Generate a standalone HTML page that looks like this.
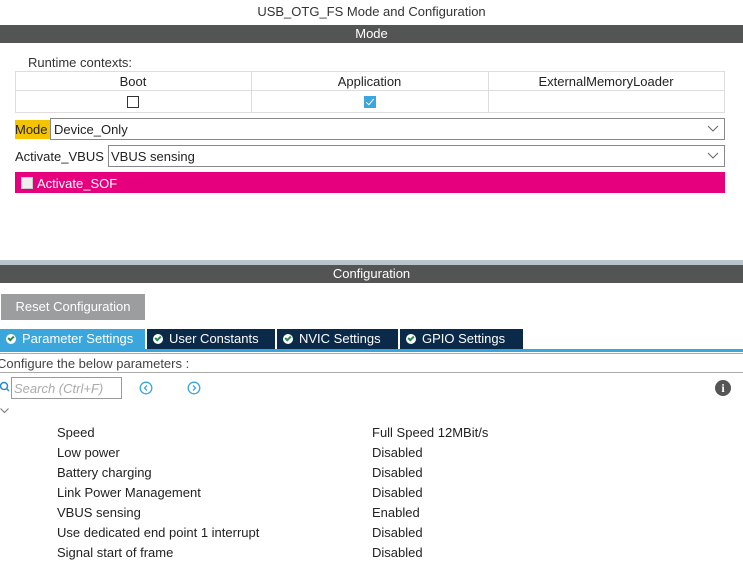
<html><head><style>
body{margin:0;width:743px;height:569px;background:#fff;font-family:"Liberation Sans",sans-serif;font-size:13px;color:#222;position:relative;overflow:hidden}
.a{position:absolute}
.bar{background:#535554;color:#fff;text-align:center;left:0;width:743px}
.row{position:absolute;left:57px;font-size:13px}
.val{position:absolute;left:372px}
.tab{position:absolute;top:329px;height:20px;color:#fff;font-size:13px;line-height:20px;background:#0b2a4a}
.chk{display:inline-block;width:10px;height:10px;border-radius:50%;background:#fff;vertical-align:-1px;margin:0 6px 0 6px;position:relative}
.chk:after{content:"";position:absolute;left:3px;top:1px;width:2px;height:4px;border:solid #2a8a4a;border-width:0 2px 2px 0;transform:rotate(45deg)}
</style></head><body>
<div class="a" style="top:4px;width:743px;text-align:center;font-size:13px;color:#333">USB_OTG_FS Mode and Configuration</div>
<div class="a bar" style="top:25px;height:18px;line-height:18px">Mode</div>
<div class="a" style="left:28px;top:55px;color:#333">Runtime contexts:</div>
<div class="a" style="left:15px;top:71px;width:708px;height:40px;border:1px solid #ddd"></div>
<div class="a" style="left:15px;top:90px;width:709px;height:1px;background:#ddd"></div>
<div class="a" style="left:251px;top:71px;width:1px;height:41px;background:#ddd"></div>
<div class="a" style="left:488px;top:71px;width:1px;height:41px;background:#ddd"></div>
<div class="a" style="left:15px;top:74px;width:236px;text-align:center">Boot</div>
<div class="a" style="left:251px;top:74px;width:237px;text-align:center">Application</div>
<div class="a" style="left:488px;top:74px;width:236px;text-align:center">ExternalMemoryLoader</div>
<div class="a" style="left:127px;top:96px;width:10px;height:10px;border:1px solid #333"></div>
<div class="a" style="left:364px;top:96px;width:12px;height:12px;background:#3aa7e0"><div style="position:absolute;left:4px;top:1px;width:3px;height:7px;border:solid #fff;border-width:0 1px 1px 0;transform:rotate(40deg)"></div></div>
<div class="a" style="left:15px;top:120px;width:35px;height:19px;background:#f5c400"></div>
<div class="a" style="left:15px;top:122px">Mode</div>
<div class="a" style="left:50px;top:118px;width:673px;height:20px;border:1px solid #888"></div>
<div class="a" style="left:54px;top:122px">Device_Only</div>
<svg class="a" style="left:707px;top:125px" width="12" height="8"><path d="M1 1L6 6L11 1" fill="none" stroke="#666"/></svg>
<div class="a" style="left:15px;top:149px">Activate_VBUS</div>
<div class="a" style="left:108px;top:145px;width:615px;height:20px;border:1px solid #888"></div>
<div class="a" style="left:111px;top:149px">VBUS sensing</div>
<svg class="a" style="left:707px;top:152px" width="12" height="8"><path d="M1 1L6 6L11 1" fill="none" stroke="#666"/></svg>
<div class="a" style="left:15px;top:172px;width:710px;height:21px;background:#e6007e"></div>
<div class="a" style="left:21px;top:177px;width:10px;height:10px;background:#eee;border:1px solid #ccc"></div>
<div class="a" style="left:37px;top:176px;color:#fff">Activate_SOF</div>
<div class="a" style="left:0;top:260px;width:743px;height:5px;background:#b9c4cb"></div>
<div class="a bar" style="top:265px;height:18px;line-height:18px">Configuration</div>
<div class="a" style="left:1px;top:294px;width:144px;height:26px;background:#9b9d9e;color:#fff;line-height:26px;text-align:center">Reset Configuration</div>
<div class="tab" style="left:0;width:145px;background:#3ba6dc"><span class="chk"></span>Parameter Settings</div>
<div class="tab" style="left:147px;width:128px"><span class="chk"></span>User Constants</div>
<div class="tab" style="left:277px;width:121px"><span class="chk"></span>NVIC Settings</div>
<div class="tab" style="left:400px;width:123px"><span class="chk"></span>GPIO Settings</div>
<div class="a" style="left:0;top:349px;width:743px;height:3px;background:#3ba6dc"></div>
<div class="a" style="left:0;top:353px;width:743px;height:1px;background:#aaa"></div>
<div class="a" style="left:-3px;top:356px;color:#444">Configure the below parameters :</div>
<div class="a" style="left:0;top:372px;width:743px;height:1px;background:#aaa"></div>
<svg class="a" style="left:0;top:381px" width="10" height="12"><circle cx="4" cy="5" r="3.5" fill="none" stroke="#2a8ad0" stroke-width="1.5"/><path d="M6.5 7.5L9 10" stroke="#2a8ad0" stroke-width="1.5"/></svg>
<div class="a" style="left:11px;top:377px;width:109px;height:20px;border:1px solid #999"></div>
<div class="a" style="left:14px;top:381px;color:#aaa;font-style:italic">Search (Ctrl+F)</div>
<svg class="a" style="left:139px;top:381px" width="14" height="14"><circle cx="7" cy="7" r="5.8" fill="none" stroke="#3ba6dc" stroke-width="1.3"/><path d="M8 4.5L5.5 7L8 9.5" fill="none" stroke="#3ba6dc" stroke-width="1.3"/></svg>
<svg class="a" style="left:187px;top:381px" width="14" height="14"><circle cx="7" cy="7" r="5.8" fill="none" stroke="#3ba6dc" stroke-width="1.3"/><path d="M6 4.5L8.5 7L6 9.5" fill="none" stroke="#3ba6dc" stroke-width="1.3"/></svg>
<div class="a" style="left:715px;top:380px;width:16px;height:16px;border-radius:50%;background:#555;color:#fff;font-weight:bold;font-size:12px;line-height:16px;text-align:center;font-family:'Liberation Serif',serif">i</div>
<svg class="a" style="left:0;top:408px" width="10" height="6"><path d="M0.5 0.5L4.5 4.5L8.5 0.5" fill="none" stroke="#777"/></svg>
<div class="row" style="top:425px">Speed</div><div class="val" style="top:425px">Full Speed 12MBit/s</div>
<div class="row" style="top:445px">Low power</div><div class="val" style="top:445px">Disabled</div>
<div class="row" style="top:465px">Battery charging</div><div class="val" style="top:465px">Disabled</div>
<div class="row" style="top:485px">Link Power Management</div><div class="val" style="top:485px">Disabled</div>
<div class="row" style="top:505px">VBUS sensing</div><div class="val" style="top:505px">Enabled</div>
<div class="row" style="top:525px">Use dedicated end point 1 interrupt</div><div class="val" style="top:525px">Disabled</div>
<div class="row" style="top:545px">Signal start of frame</div><div class="val" style="top:545px">Disabled</div>
</body></html>
